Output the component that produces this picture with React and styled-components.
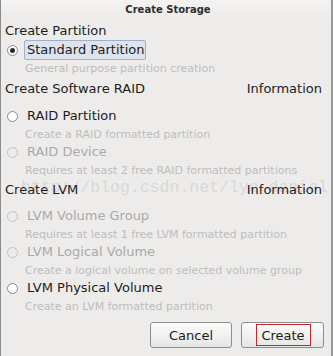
import React from 'react';
import styled, { createGlobalStyle } from 'styled-components';

const GlobalStyle = createGlobalStyle`
  html, body {
    margin: 0;
    padding: 0;
    background: #edeceb;
  }
  body {
    font-family: 'DejaVu Sans', 'Liberation Sans', sans-serif;
  }
`;

const Window = styled.div`
  position: relative;
  width: 333px;
  height: 356px;
  box-sizing: border-box;
  background: #edeceb;
  border-left: 1px solid #8c8c8c;
  border-right: 2px solid #9a9a9a;
  display: flex;
  flex-direction: column;
  overflow: hidden;
`;

const TitleBar = styled.div`
  height: 19px;
  line-height: 19px;
  text-align: center;
  font-size: 10px;
  font-weight: bold;
  color: #2e2e2e;
  background: linear-gradient(#f4f3f2, #efeeed 70%, #edeceb);
  padding-left: 4px;
`;

const Body = styled.div`
  position: relative;
  z-index: 1;
  display: flex;
  flex-direction: column;
  padding: 0 9px 0 4px;
`;

const Header = styled.div`
  display: flex;
  justify-content: space-between;
  font-size: 13px;
  line-height: 16px;
  color: #1c1c1c;
  margin-top: ${p => p.$top}px;
`;

const Option = styled.div`
  display: flex;
  flex-direction: column;
  margin-top: ${p => p.$top || 0}px;
`;

const Row = styled.div`
  display: flex;
  align-items: center;
  height: 20px;
`;

const RadioWrap = styled.div`
  width: 19px;
  box-sizing: border-box;
  display: flex;
  align-items: center;
  padding-left: 2px;
`;

const Radio = styled.span`
  position: relative;
  width: 11px;
  height: 11px;
  box-sizing: border-box;
  border-radius: 50%;
  border: 1px solid ${p => (p.$disabled ? '#c2c2c2' : '#8a8a8a')};
  background: ${p => (p.$disabled ? '#edeceb' : '#ffffff')};
  &::after {
    content: '';
    display: ${p => (p.$checked ? 'block' : 'none')};
    position: absolute;
    left: 2px;
    top: 2px;
    width: 5px;
    height: 5px;
    border-radius: 50%;
    background: #2a2a2a;
  }
`;

const Label = styled.span`
  font-size: 13px;
  line-height: 18px;
  padding: 0 1px 0 2px;
  border: 1px solid ${p => (p.$focused ? '#9eb0cb' : 'transparent')};
  border-radius: 2px;
  background: ${p => (p.$focused ? '#dde4ee' : 'transparent')};
  color: ${p => (p.$disabled ? '#a9a9a9' : '#1c1c1c')};
`;

const Desc = styled.div`
  font-size: 11px;
  line-height: 13px;
  color: #bdbdbc;
  padding-left: 20px;
  margin-top: 2px;
  white-space: nowrap;
`;

const Buttons = styled.div`
  display: flex;
  justify-content: flex-end;
  gap: 9px;
  margin-top: 9px;
  margin-right: -2px;
`;

const Button = styled.button`
  width: ${p => p.$w}px;
  height: 26px;
  box-sizing: border-box;
  border: 1px solid #8e8e8e;
  border-radius: 3px;
  background: linear-gradient(#fbfbfb, #f1f1f0 50%, #e6e6e5);
  font-family: 'DejaVu Sans', sans-serif;
  font-size: 13px;
  color: #1c1c1c;
  padding: 0;
  display: flex;
  align-items: center;
  justify-content: center;
`;

const FocusMark = styled.span`
  display: flex;
  align-items: center;
  justify-content: center;
  width: 55px;
  height: 22px;
  box-sizing: border-box;
  border: 1px solid #c1272d;
  margin-left: 1px;
`;

const Watermark = styled.div`
  position: absolute;
  left: 20px;
  top: 178px;
  font-family: 'Liberation Mono', monospace;
  font-size: 16.5px;
  line-height: 20px;
  color: #d9d8d7;
  white-space: nowrap;
  pointer-events: none;
  z-index: 0;
`;

const Choice = ({ label, desc, checked, disabled, focused, top }) => (
  <Option $top={top}>
    <Row>
      <RadioWrap>
        <Radio $checked={checked} $disabled={disabled} />
      </RadioWrap>
      <Label $focused={focused} $disabled={disabled}>{label}</Label>
    </Row>
    <Desc>{desc}</Desc>
  </Option>
);

export default function App() {
  return (
    <>
      <GlobalStyle />
      <Window>
        <TitleBar>Create Storage</TitleBar>
        <Watermark>http://blog.csdn.net/lyq_daniel</Watermark>
        <Body>
          <Header $top={4}>
            <span>Create Partition</span>
          </Header>
          <Choice
            top={1}
            checked
            focused
            label="Standard Partition"
            desc="General purpose partition creation"
          />
          <Header $top={6}>
            <span>Create Software RAID</span>
            <span>Information</span>
          </Header>
          <Choice top={9} label="RAID Partition" desc="Create a RAID formatted partition" />
          <Choice
            top={1}
            disabled
            label="RAID Device"
            desc="Requires at least 2 free RAID formatted partitions"
          />
          <Header $top={5}>
            <span>Create LVM</span>
            <span>Information</span>
          </Header>
          <Choice
            top={8}
            disabled
            label="LVM Volume Group"
            desc="Requires at least 1 free LVM formatted partition"
          />
          <Choice
            top={1}
            disabled
            label="LVM Logical Volume"
            desc="Create a logical volume on selected volume group"
          />
          <Choice top={1} label="LVM Physical Volume" desc="Create an LVM formatted partition" />
          <Buttons>
            <Button $w={82}>Cancel</Button>
            <Button $w={83}>
              <FocusMark>Create</FocusMark>
            </Button>
          </Buttons>
        </Body>
      </Window>
    </>
  );
}
